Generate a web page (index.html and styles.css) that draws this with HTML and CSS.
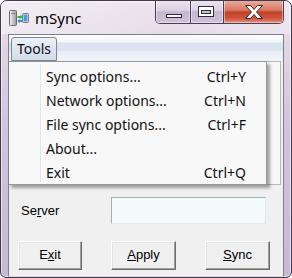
FILE: index.html
```html
<!DOCTYPE html>
<html>
  <head>
    <title>mSync</title>
    <link rel="stylesheet" href="styles.css">
  </head>
  <body>
    <div class="window">
      <div class="titlebar">
        <svg class="app-icon" width="20" height="16" viewBox="0 0 20 16">
          <defs>
            <linearGradient id="tower" x1="0" y1="0" x2="1" y2="0">
              <stop offset="0" stop-color="#f4f4f4" />
              <stop offset="1" stop-color="#9a9a9a" />
            </linearGradient>
          </defs>
          <rect x="0.5" y="0.5" width="7" height="15" rx="1" fill="url(#tower)" stroke="#6c6c6c" />
          <rect x="2" y="3" width="4" height="1" fill="#7a7a7a" />
          <path d="M8.5 6 h3 v-1.5 l2 2.5 -2 2.5 v-1.5 h-3 z" fill="#3cb43c" />
          <path d="M13.5 10 h-3 v-1.5 l-2 2.5 2 2.5 v-1.5 h3 z" fill="#2a8fd8" />
          <rect x="13.5" y="3.5" width="6" height="9" rx="1" fill="#b9c6d0" stroke="#6f7c88" />
          <rect x="15" y="5" width="3" height="6" fill="#2fa6ea" />
        </svg>
        <span class="title">mSync</span>
        <div class="caption-buttons">
          <div class="caption-btn minimize">
            <svg width="34" height="23" viewBox="0 0 34 23">
              <rect x="10.5" y="14.5" width="15" height="3" fill="#fff" stroke="#2e2b36" />
            </svg>
          </div>
          <div class="caption-btn maximize">
            <svg width="32" height="23" viewBox="0 0 32 23">
              <rect x="7.5" y="6.5" width="15" height="10" fill="#fff" stroke="#2e2b36" />
              <rect x="10.5" y="10.5" width="9" height="3" fill="#cbbfd6" stroke="#2e2b36" />
            </svg>
          </div>
          <div class="caption-btn close">
            <svg width="59" height="23" viewBox="0 0 59 23">
              <polygon points="21.5,5.5 26.5,5.5 30,9.5 33.5,5.5 38.5,5.5 32.5,12 38.5,18.5 33.5,18.5 30,14.5 26.5,18.5 21.5,18.5 27.5,12" fill="#fff" stroke="#3a2a2a" />
            </svg>
          </div>
        </div>
      </div>

      <div class="client">
        <div class="menubar">
          <span class="menubar-item active">Tools</span>
        </div>

        <div class="content">
          <div class="panel"></div>

          <div class="field-row">
            <label class="field-label" for="server">Se<u>r</u>ver</label>
            <input class="field-input" type="text" id="server" />
          </div>

          <div class="button-row">
            <button class="win-button">E<u>x</u>it</button>
            <button class="win-button"><u>A</u>pply</button>
            <button class="win-button"><u>S</u>ync</button>
          </div>
        </div>

        <!-- Open Tools menu -->
        <div class="dropdown">
          <div class="menu-row"><span>Sync options...</span><span>Ctrl+Y</span></div>
          <div class="menu-row"><span>Network options...</span><span>Ctrl+N</span></div>
          <div class="menu-row"><span>File sync options...</span><span>Ctrl+F</span></div>
          <div class="menu-row"><span>About...</span><span></span></div>
          <div class="menu-row"><span>Exit</span><span>Ctrl+Q</span></div>
        </div>
      </div>
    </div>
  </body>
</html>
```

FILE: styles.css
```css
body {
  margin: 0;
  background-color: #ffffff;
  font-family: "Noto Sans", sans-serif;
}

.window {
  width: 292px;
  height: 278px;
  box-sizing: border-box;
  border: 1px solid #43394d;
  border-radius: 7px 7px 6px 6px;
  background: linear-gradient(to bottom, #e9e0ea 0, #e4d9e6 30px, #d3c4dd 120px, #c9b8d6 100%);
  box-shadow: inset 0 0 0 1px rgba(255, 255, 255, 0.55);
  display: flex;
  flex-direction: column;
  overflow: hidden;
}

/* Title bar */
.titlebar {
  height: 33px;
  display: flex;
  align-items: flex-start;
  padding: 0 7px 0 8px;
  background: linear-gradient(100deg, rgba(255, 255, 255, 0.45) 0, rgba(255, 255, 255, 0.1) 60%, rgba(255, 255, 255, 0.3) 100%);
}

.app-icon {
  margin-top: 9px;
}

.title {
  margin-left: 6px;
  margin-top: 8px;
  font-size: 15px;
  line-height: 18px;
  color: #000;
}

.caption-buttons {
  margin-left: auto;
  margin-top: -1px;
  display: flex;
  height: 24px;
  box-sizing: border-box;
  border: 1px solid #4a3e55;
  border-top: none;
  border-radius: 0 0 5px 5px;
  overflow: hidden;
}

.caption-btn {
  height: 23px;
  box-shadow: inset 0 0 0 1px rgba(255, 255, 255, 0.45);
}

.caption-btn svg {
  display: block;
}

.minimize,
.maximize {
  background: linear-gradient(to bottom, #ece5ef 0, #dcd0e3 45%, #c6b6d2 52%, #cfc1da 100%);
  border-right: 1px solid #4a3e55;
}

.close {
  background: linear-gradient(to bottom, #eab0a2 0, #d9765f 45%, #c2412a 52%, #cf553e 80%, #e39580 100%);
}

/* Client area */
.client {
  position: relative;
  flex: 1;
  margin: 0 7px;
  border: 1px solid #7c7f8c;
  border-bottom-color: #ded6e4;
  background-color: #f0f0f0;
  overflow: hidden;
  display: flex;
  flex-direction: column;
}

.menubar {
  height: 26px;
  background: linear-gradient(to bottom, #fbfcfd 0, #f3f6fa 26%, #dbe5f1 30%, #d9e3f0 58%, #e9eef6 64%, #f0f3f8 100%);
  position: relative;
}

.menubar-item {
  position: absolute;
  left: 2px;
  top: 2px;
  width: 46px;
  height: 24px;
  box-sizing: border-box;
  border: 1px solid #7d8797;
  border-radius: 3px 3px 0 0;
  background: linear-gradient(to bottom, #eef1f6 0, #dfe5ee 50%, #d4dce8 100%);
  font-size: 14px;
  line-height: 22px;
  text-align: center;
  color: #0b0b1e;
}

.content {
  flex: 1;
}

.panel {
  margin-left: 3px;
  width: 269px;
  height: 124px;
  box-sizing: border-box;
  border: 1px solid #b9b9b9;
  background-color: #f7f7f7;
}

.field-row {
  display: flex;
  align-items: center;
  margin-top: 12px;
  padding-left: 12px;
  font-family: "Liberation Sans", Arial, sans-serif;
  font-size: 13px;
}

.field-label {
  width: 90px;
  color: #000;
}

.field-input {
  width: 155px;
  height: 27px;
  box-sizing: border-box;
  border: 1px solid #a9aeb5;
  border-right-color: #dfe4ea;
  border-bottom-color: #e3e8ee;
  background-color: #f3fbfc;
  margin: 0;
}

.button-row {
  display: flex;
  gap: 29px;
  margin-top: 17px;
  padding-left: 9px;
}

.win-button {
  width: 65px;
  height: 29px;
  padding: 0 0 2px;
  box-sizing: border-box;
  border: 1px solid;
  border-color: #ffffff #6b6b6b #6b6b6b #ffffff;
  box-shadow: inset -1px -1px #a0a0a0, inset 1px 1px #e3e3e3;
  background-color: #f0f0f0;
  font-family: "Liberation Sans", Arial, sans-serif;
  font-size: 13px;
  color: #000;
}

.win-button:first-child {
  width: 64px;
}

/* Open drop-down menu */
.dropdown {
  position: absolute;
  left: -1px;
  top: 26px;
  width: 259px;
  box-sizing: border-box;
  padding: 2px 0 0;
  border: 1px solid #979797;
  background-color: #f8f8f8;
  box-shadow: 3px 3px 3px rgba(0, 0, 0, 0.35);
  font-size: 14px;
  color: #111;
}

.dropdown::before {
  content: "";
  position: absolute;
  left: 31px;
  top: 2px;
  bottom: 2px;
  width: 1px;
  background-color: #e2e3e3;
  border-right: 1px solid #ffffff;
}

.menu-row {
  height: 24px;
  display: flex;
  align-items: center;
  justify-content: space-between;
  padding: 0 20px 0 37px;
}
```
